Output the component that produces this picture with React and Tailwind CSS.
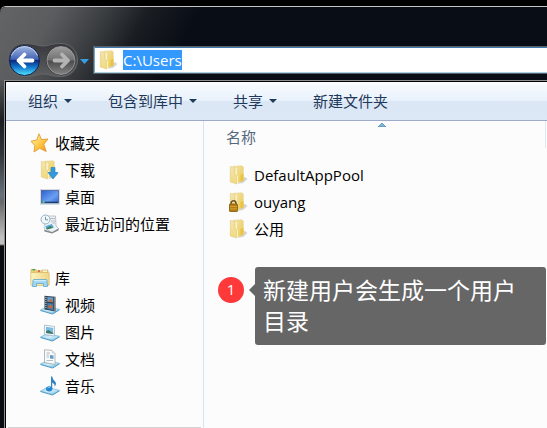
import React, { useEffect, useRef } from 'react';

function Defs() {
  return (
    <svg className="absolute size-0" aria-hidden="true">
      <defs>
        <linearGradient id="gold" x1="0" y1="0" x2="1" y2="0">
          <stop offset="0" stopColor="#fdf3c0" />
          <stop offset="1" stopColor="#efd685" />
        </linearGradient>
        <linearGradient id="goldBack" x1="0" y1="0" x2="1" y2="1">
          <stop offset="0" stopColor="#f3e6ae" />
          <stop offset="1" stopColor="#ecc94f" />
        </linearGradient>
        <linearGradient id="goldFront" x1="0" y1="0" x2="0" y2="1">
          <stop offset="0" stopColor="#f3e5ac" />
          <stop offset="1" stopColor="#f1d97c" />
        </linearGradient>
        <linearGradient id="star" x1="0" y1="0" x2="1" y2="1">
          <stop offset="0.2" stopColor="#ffe98a" />
          <stop offset="0.6" stopColor="#ffc23c" />
          <stop offset="1" stopColor="#f08a1c" />
        </linearGradient>
        <linearGradient id="screen" x1="0" y1="0" x2="1" y2="1">
          <stop offset="0" stopColor="#2a5fd0" />
          <stop offset="0.6" stopColor="#6b9ff2" />
          <stop offset="1" stopColor="#2f63cc" />
        </linearGradient>
        <linearGradient id="tray" x1="0" y1="0" x2="1" y2="1">
          <stop offset="0" stopColor="#8ccdec" />
          <stop offset="0.5" stopColor="#d3effb" />
          <stop offset="1" stopColor="#6db5dc" />
        </linearGradient>
        <linearGradient id="blueBall" x1="0" y1="0" x2="0" y2="1">
          <stop offset="0" stopColor="#a3b9e4" />
          <stop offset="0.46" stopColor="#4465b4" />
          <stop offset="0.5" stopColor="#0a2a80" />
          <stop offset="0.72" stopColor="#1278cc" />
          <stop offset="1" stopColor="#55e6ff" />
        </linearGradient>
        <linearGradient id="greyBall" x1="0" y1="0" x2="0" y2="1">
          <stop offset="0" stopColor="#a0a0a0" />
          <stop offset="0.48" stopColor="#717171" />
          <stop offset="0.52" stopColor="#4c4c4c" />
          <stop offset="1" stopColor="#858585" />
        </linearGradient>
        <linearGradient id="capsule" x1="0" y1="0" x2="0" y2="1">
          <stop offset="0" stopColor="#36383b" />
          <stop offset="1" stopColor="#5c5e61" />
        </linearGradient>
      </defs>
    </svg>
  );
}

function Icon({ children }) {
  return (
    <svg className="size-5 shrink-0" viewBox="0 0 20 20" aria-hidden="true">
      {children}
    </svg>
  );
}

function FolderShape() {
  return (
    <>
      <path d="M13 13 L16 12 L18.500 14 L14 18 L9 18.800 Z" fill="#777" opacity="0.3" />
      <path d="M4.500 1.300 L13 0.800 L14.300 2 V15.500 L8 18 L4.500 16 Z" fill="url(#goldBack)" stroke="#e6d491" strokeWidth="0.600" />
      <path d="M11.500 10 L14.500 9 V15.500 L11.500 16.800 Z" fill="#e9c443" />
      <path d="M1.300 1.500 L5.500 2.200 L6 9.500 L8 11 V19 L1.300 17 Z" fill="url(#goldFront)" stroke="#dfca80" strokeWidth="0.600" />
      <path d="M6.600 3 L7.600 3.200 L7.800 10.500 L6.600 9.500 Z" fill="#fffae0" />
      <path d="M8.100 11 L8.900 10.500 V18.300 L8.100 18.800 Z" fill="#fffae0" />
    </>
  );
}

function FolderIcon() {
  return (
    <Icon>
      <FolderShape />
    </Icon>
  );
}

function LockedFolderIcon() {
  return (
    <Icon>
      <FolderShape />
      <path d="M2 12.500 V11.500 a2.500 2.700 0 0 1 5 0 V12.500" fill="none" stroke="#6f5426" strokeWidth="1.500" />
      <rect x="0.500" y="12" width="8" height="7.500" rx="0.600" fill="#b57d12" stroke="#80560a" strokeWidth="0.800" />
      <path d="M1 14.500 H8 M1 16.800 H8" stroke="#dca832" strokeWidth="0.800" />
    </Icon>
  );
}

function DownloadsIcon() {
  return (
    <Icon>
      <FolderShape />
      <path d="M11 7.500 H15 V12.500 H18 L13 19 L8 12.500 H11 Z" fill="#2f9be0" stroke="#1f78ba" strokeWidth="0.600" />
    </Icon>
  );
}

function StarIcon() {
  return (
    <Icon>
      <path d="M9 0.800 L11.500 6.600 L18 6 L13.800 11.200 L16.200 18.500 L9.600 15.300 L4 19 L4.800 12.500 L1 8.200 L6.800 7 Z" fill="url(#star)" stroke="#e29a35" strokeWidth="0.900" strokeLinejoin="round" />
    </Icon>
  );
}

function DesktopIcon() {
  return (
    <Icon>
      <rect x="0.500" y="2.500" width="19" height="15" fill="#dbe6f2" stroke="#b9c6d4" strokeWidth="0.500" />
      <rect x="1.500" y="3.500" width="17" height="12.500" fill="url(#screen)" stroke="#3b568c" strokeWidth="0.700" />
      <path d="M2 15.300 H18" stroke="#1c3660" strokeWidth="1.200" />
      <circle cx="3.500" cy="15" r="1.200" fill="#56c8b0" />
    </Icon>
  );
}

function RecentIcon() {
  return (
    <Icon>
      <path d="M7 2 H15.500 L16 12 L19 15 L12 18.500 L4 14 Z" fill="#eef1f3" stroke="#a7aeb4" strokeWidth="0.700" />
      <path d="M10 4.500 H15 M11 7 H15 M12 9 H15" stroke="#a9b4bd" strokeWidth="0.900" />
      <path d="M4.500 12 L12 9.500 L14.500 13.500 L7 16 Z" fill="#58a9dc" stroke="#f8fbfd" strokeWidth="0.800" />
      <path d="M6 14.500 L10 12 L13.500 13.800 L7 15.500 Z" fill="#3d815f" />
      <path d="M4 15.500 L12 18.300 L18.500 14.500 V16.500 L12 19.600 L4.500 17.500 Z" fill="#80888e" />
      <circle cx="5.500" cy="5.500" r="4.500" fill="#eff7fb" stroke="#9cb1bf" strokeWidth="1" />
      <path d="M5.500 2.800 V5.800 H8" fill="none" stroke="#6a8ba2" strokeWidth="0.900" />
    </Icon>
  );
}

function LibraryIcon() {
  return (
    <Icon>
      <path d="M1 3 V1.500 H6 L7 3 H11 L12 2 H18 V5 H1 Z" fill="#edcf75" stroke="#caa953" strokeWidth="0.600" />
      <path d="M2.500 1.700 H5" stroke="#44a45c" strokeWidth="1.500" />
      <path d="M8 3 H10" stroke="#d84f3c" strokeWidth="1.500" />
      <path d="M13 3.200 H17" stroke="#f7f2df" strokeWidth="1.500" />
      <rect x="0.800" y="4.500" width="18.400" height="13" rx="0.800" fill="url(#gold)" stroke="#d8b968" strokeWidth="0.700" />
      <path d="M2.500 18.500 L3 12.500 Q3 11.500 4 11.500 H16 Q17 11.500 17 12.500 L17.500 18.500 H13.500 V15.500 H6.500 V18.500 Z" fill="#9ed7f1" stroke="#60a9d0" strokeWidth="0.800" />
      <path d="M4 12.700 H16" stroke="#d9f3fd" strokeWidth="1" />
    </Icon>
  );
}

function Tray() {
  return (
    <>
      <path d="M0.500 15 L7 11.500 L19.500 14.300 L13 18.500 Z" fill="url(#tray)" stroke="#6aaed2" strokeWidth="0.600" />
      <path d="M0.500 15.500 L12.500 19 L19.500 14.800" fill="none" stroke="#3e93c3" strokeWidth="0.900" />
    </>
  );
}

function VideosIcon() {
  return (
    <Icon>
      <Tray />
      <path d="M4.500 0.700 L15.500 1.700 V16.500 L4.500 14.500 Z" fill="#36424c" />
      <path d="M7.300 2 L13 2.500 V7.300 L7.300 6.800 Z" fill="#5ca2d8" />
      <path d="M7.300 8 L13 8.500 V15 L7.300 14 Z" fill="#397fba" />
      <path d="M8 6.500 L11 3.500 L13 7 Z M8 12 L10 9 L13 12 L11 14 Z" fill="#c56a3d" />
      <path d="M5.900 2 V14 M14.300 2.500 V16" stroke="#dbe4e8" strokeWidth="1" strokeDasharray="1 1" />
    </Icon>
  );
}

function PicturesIcon() {
  return (
    <Icon>
      <Tray />
      <path d="M4.500 3 L14.500 4.500 V14 L4.500 12.500 Z" fill="#f2f6f8" stroke="#9cabb5" strokeWidth="0.700" />
      <path d="M6 4.800 L13.200 5.900 V12 L6 10.900 Z" fill="#79bde5" />
      <path d="M6 9.300 L8.500 8 L13.200 11 V12 L6 10.900 Z" fill="#3c7a66" />
    </Icon>
  );
}

function DocumentsIcon() {
  return (
    <Icon>
      <Tray />
      <path d="M4.500 0.800 L12 1.400 L15 4.500 V15.500 L4.500 13.500 Z" fill="#f8fafb" stroke="#929da6" strokeWidth="0.700" />
      <path d="M12 1.400 V4.500 H15 Z" fill="#cfd8de" />
      <path d="M6.500 4 H10 M6.500 6 H9 M6.500 8 H9 M6.500 11.500 H13" stroke="#a2adb6" strokeWidth="0.800" />
      <path d="M10 6 L13.500 6.500 V10 L10 9.500 Z" fill="#5f9cc6" />
    </Icon>
  );
}

function MusicIcon() {
  return (
    <Icon>
      <Tray />
      <ellipse cx="9.200" cy="12.800" rx="3.200" ry="2.600" fill="#2586cf" />
      <path d="M11 13 V0.500 H12.200 Q12.500 3.500 15 5.500 Q17 7.500 14.800 10.500 Q15 7.800 12.200 6.500 V13 Z" fill="#2f83c0" />
      <path d="M7.500 12 Q8.500 11 10 11.500" fill="none" stroke="#91d0f7" strokeWidth="0.900" />
    </Icon>
  );
}

function Caret() {
  return (
    <svg className="h-1 w-2" viewBox="0 0 8 4" aria-hidden="true">
      <path d="M0 0 H8 L4 4 Z" fill="#1e3c5c" />
    </svg>
  );
}

function NavButtons() {
  return (
    <div className="relative h-9 w-[86px] shrink-0">
      <svg className="absolute inset-0 h-9 w-[86px]" viewBox="0 0 86 36" aria-hidden="true">
        <path d="M17 1.500 C28 1.500 30 4 36 4 C42 4 44 1.500 54 1.500 C64 1.500 70.500 9 70.500 18 C70.500 27 64 34.500 54 34.500 C44 34.500 42 32 36 32 C30 32 28 34.500 17 34.500 C8 34.500 1 27 1 18 C1 9 8 1.500 17 1.500 Z" fill="url(#capsule)" stroke="#64666a" strokeWidth="1" />
        <circle cx="17.500" cy="18.500" r="15" fill="url(#blueBall)" stroke="#12264d" strokeWidth="1" />
        <path d="M4.500 13.500 A14 14 0 0 1 30.500 13.500" fill="none" stroke="#c3d0ec" strokeWidth="1" />
        <path d="M25.500 18.500 H11.500 M17.500 12.500 L11.500 18.500 L17.500 24.500" fill="none" stroke="#fff" strokeWidth="3.800" strokeLinecap="round" strokeLinejoin="round" />
        <circle cx="54" cy="18.500" r="14.500" fill="url(#greyBall)" stroke="#303030" strokeWidth="1" />
        <circle cx="54" cy="18.500" r="14" fill="none" stroke="#a6a6a6" strokeWidth="0.800" />
        <path d="M47.500 18.500 H61 M55 12.500 L61 18.500 L55 24.500" fill="none" stroke="#b4b4b4" strokeWidth="3.800" strokeLinecap="round" strokeLinejoin="round" />
        <path d="M73 17 H82 L77.500 22 Z" fill="#3b9ce4" />
      </svg>
      <div className="relative flex h-9 gap-1">
        <button type="button" aria-label="后退" className="w-8" />
        <button type="button" aria-label="前进" className="w-8" />
        <button type="button" aria-label="历史记录" className="w-3" />
      </div>
    </div>
  );
}

function AddressBar() {
  const field = useRef(null);
  useEffect(() => {
    field.current.focus();
    field.current.select();
  }, []);
  return (
    <div className="min-w-0 flex-1 border-y border-l border-[#585f66]">
      <label className="flex h-[26px] items-center gap-1 border-y border-l border-t-[#3f78ae] border-b-[#a9d3e4] border-l-[#7ba7c4] bg-white pl-1">
        <FolderIcon />
        <input
          ref={field}
          aria-label="地址"
          defaultValue="C:\Users"
          className="h-5 min-w-0 flex-1 bg-transparent text-[15px] leading-5 text-black outline-none selection:bg-[#3399ff] selection:text-white"
        />
      </label>
    </div>
  );
}

const tools = [
  { label: '组织', menu: true },
  { label: '包含到库中', menu: true },
  { label: '共享', menu: true },
  { label: '新建文件夹', menu: false },
];

const groups = [
  {
    label: '收藏夹',
    icon: StarIcon,
    items: [
      { label: '下载', icon: DownloadsIcon },
      { label: '桌面', icon: DesktopIcon },
      { label: '最近访问的位置', icon: RecentIcon },
    ],
  },
  {
    label: '库',
    icon: LibraryIcon,
    items: [
      { label: '视频', icon: VideosIcon },
      { label: '图片', icon: PicturesIcon },
      { label: '文档', icon: DocumentsIcon },
      { label: '音乐', icon: MusicIcon },
    ],
  },
];

const files = [
  { label: 'DefaultAppPool', icon: FolderIcon },
  { label: 'ouyang', icon: LockedFolderIcon },
  { label: '公用', icon: FolderIcon },
];

function Sidebar() {
  return (
    <nav className="flex w-[198px] shrink-0 flex-col justify-between border-r border-[#d6e3f2] bg-[#fcfcfc]">
      <div className="flex flex-col gap-[27px] pt-2">
        {groups.map((group) => (
          <section key={group.label}>
            <h2 className="flex h-[27px] items-center gap-[5px] pl-6">
              <group.icon />
              {group.label}
            </h2>
            <ul>
              {group.items.map((item) => (
                <li key={item.label}>
                  <a href="#" className="flex h-[27px] items-center gap-[5px] pl-[34px]">
                    <item.icon />
                    {item.label}
                  </a>
                </li>
              ))}
            </ul>
          </section>
        ))}
      </div>
      <div className="mx-0.5 h-px bg-[#d4d4d4]" />
    </nav>
  );
}

function Callout() {
  return (
    <div className="mt-[25px] mr-px ml-3.5 flex items-start">
      <span className="mt-2.5 flex size-[26px] shrink-0 justify-center rounded-full bg-[#fd3939] text-[15px] leading-6 text-white">
        1
      </span>
      <svg className="mt-[17px] ml-[5px] h-3 w-1.5 shrink-0" viewBox="0 0 6 12" aria-hidden="true">
        <path d="M6 0 V12 L0 6 Z" fill="#666" />
      </svg>
      <p className="min-w-0 flex-1 rounded-[3px] bg-[#666] p-2 text-[23px] leading-[31px] text-white">
        新建用户会生成一个用户目录
      </p>
    </div>
  );
}

function FileList() {
  return (
    <main className="min-w-0 flex-1 bg-[#fcfcfc]">
      <div className="relative mr-px ml-3.5 flex h-[27px] items-end border-r border-[#e0eaf5] pl-2 text-[#56687e]">
        <svg className="absolute top-0.5 left-1/2 h-1 w-2 -translate-x-1/2" viewBox="0 0 8 4" aria-hidden="true">
          <path d="M0 4 L4 0 L8 4 Z" fill="#78b7d8" stroke="#3d7493" strokeWidth="0.600" />
        </svg>
        <span className="leading-[22px]">名称</span>
      </div>
      <ul className="mt-[13px]">
        {files.map((file) => (
          <li key={file.label}>
            <a href="#" className="flex h-[27px] items-center gap-[5px] pl-[25px]">
              <file.icon />
              {file.label}
            </a>
          </li>
        ))}
      </ul>
      <Callout />
    </main>
  );
}

export default function App() {
  return (
    <div className='min-h-screen bg-black pt-1.5 font-["Open_Sans","Noto_Sans_CJK_SC",sans-serif] text-[15px] leading-5 text-black'>
      <Defs />
      <div className="flex min-h-[calc(100vh-6px)] flex-col rounded-tl-md border-t border-[#c4c4c6] bg-[#090d15]">
        <header className="flex h-[73px] items-end rounded-tl-md bg-[linear-gradient(120deg,#626466_0px,#5a5c5e_50px,#3a3d40_95px,#1a1d22_130px,#090d15_175px)] pb-0.5 pl-[7px]">
          <NavButtons />
          <div className="flex min-w-0 flex-1 pb-1">
            <AddressBar />
          </div>
        </header>
        <div className="flex flex-1 bg-[linear-gradient(180deg,#55575a_0px,#1a1e22_40px,#33373a_75px,#65717c_115px,#66686a_122px,#c0c0c0_158px,#c0c0c0_164px,#0a0d12_166px)] pl-1">
          <div className="flex min-w-0 flex-1 flex-col border-t border-l border-[#8e8e90]">
            <div className="flex flex-1 flex-col border-t border-l border-black">
              <div className="flex h-[39px] items-center gap-9 border-b border-[#9dabc9] bg-[linear-gradient(180deg,#fafcff_0%,#e8f1fb_50%,#dce7f5_50%,#dde8f6_100%)] pl-[22px] text-[#1e395b]">
                {tools.map((tool) => (
                  <button key={tool.label} type="button" className="flex shrink-0 items-center gap-1.5">
                    {tool.label}
                    {tool.menu && <Caret />}
                  </button>
                ))}
              </div>
              <div className="flex flex-1">
                <Sidebar />
                <FileList />
              </div>
            </div>
          </div>
        </div>
      </div>
    </div>
  );
}
